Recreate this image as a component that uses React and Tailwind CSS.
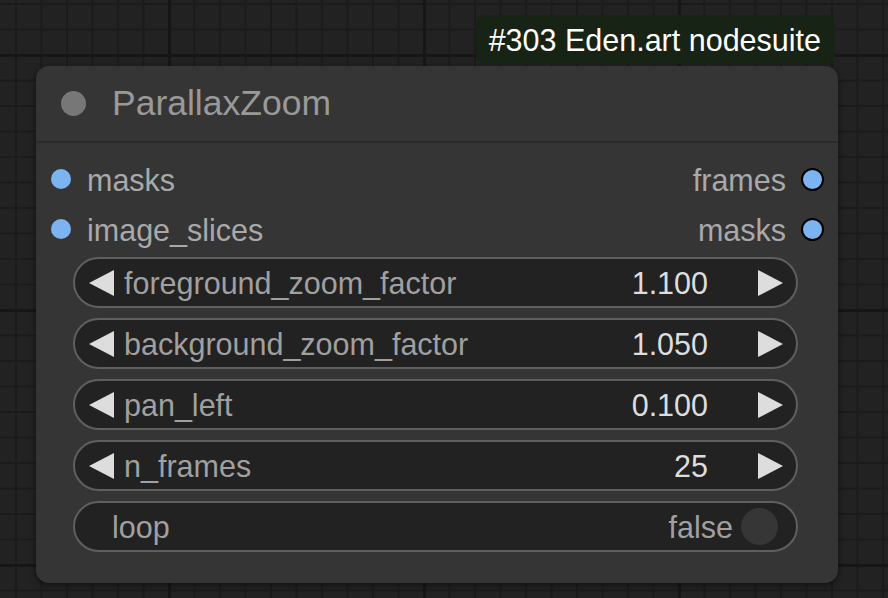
const Arrow = ({ dir }) => (
  <svg width="25" height="26" viewBox="0 0 25 26" className="shrink-0">
    {dir === "left" ? (
      <polygon points="25,0 25,26 0,13" fill="#dddddd" />
    ) : (
      <polygon points="0,0 0,26 25,13" fill="#dddddd" />
    )}
  </svg>
);

const NumberWidget = ({ label, value }) => (
  <div className="flex items-center h-[51px] rounded-full border-2 border-[#5f5f5f] bg-[#222222] pl-[14px] pr-[13px]">
    <Arrow dir="left" />
    <span className="ml-[10px] pt-[2px] text-[#a0a0a0]">{label}</span>
    <span className="ml-auto pt-[2px] text-[#dddddd]">{value}</span>
    <span className="ml-[50px] flex">
      <Arrow dir="right" />
    </span>
  </div>
);

const ToggleWidget = ({ label, value }) => (
  <div className="flex items-center h-[51px] rounded-full border-2 border-[#5f5f5f] bg-[#222222] pl-[37px] pr-[18px]">
    <span className="pt-[2px] text-[#a0a0a0]">{label}</span>
    <span className="ml-auto pt-[2px] text-[#a0a0a0]">{value}</span>
    <div className="ml-[8px] w-[37px] h-[37px] rounded-full bg-[#363636]" />
  </div>
);

const App = () => {
  const widgets = [
    { label: "foreground_zoom_factor", value: "1.100" },
    { label: "background_zoom_factor", value: "1.050" },
    { label: "pan_left", value: "0.100" },
    { label: "n_frames", value: "25" },
  ];

  return (
    <div className="w-[888px] h-[598px] overflow-hidden bg-[#222222] bg-[linear-gradient(to_right,#161616_3px,transparent_3px),linear-gradient(to_bottom,#161616_3px,transparent_3px),linear-gradient(to_right,#1b1b1b_2px,transparent_2px),linear-gradient(to_bottom,#1b1b1b_2px,transparent_2px)] bg-[size:255px_255px,255px_255px,25.5px_25.5px,25.5px_25.5px] bg-[position:168px_54px,168px_54px,15px_3px,15px_3px] font-['Liberation_Sans',Arial,sans-serif] text-[30.5px] leading-none pt-[15px]">
      <div className="flex justify-end pr-[53px]">
        <div className="h-[49px] pl-[13px] pr-[14px] pt-[2px] flex items-center rounded-[10px] bg-[#172315] text-white text-[30.5px]">
          #303 Eden.art nodesuite
        </div>
      </div>
      <div className="ml-[36px] mt-[2px] w-[802px] h-[517px] rounded-[13px] bg-[#353535] shadow-[0_2px_6px_rgba(0,0,0,0.5)]">
        <div className="h-[77px] flex items-center border-b-2 border-[#2c2c2c] pl-[25px]">
          <div className="w-[25px] h-[25px] rounded-full bg-[#777777]" />
          <span className="ml-[26px] text-[35.5px] text-[#999999]">ParallaxZoom</span>
        </div>
        <div className="pt-[11px]">
          <div className="flex items-center h-[50px] pl-[15px] pr-[14px]">
            <div className="w-[20px] h-[20px] rounded-full bg-[#7cb4f2]" />
            <span className="ml-[16px] pt-[2px] text-[#a9a9a9]">masks</span>
            <span className="ml-auto pt-[2px] text-[#a9a9a9]">frames</span>
            <div className="ml-[15px] w-[23px] h-[23px] rounded-full bg-[#7cb4f2] border-2 border-black" />
          </div>
          <div className="flex items-center h-[50px] pl-[15px] pr-[14px]">
            <div className="w-[20px] h-[20px] rounded-full bg-[#7cb4f2]" />
            <span className="ml-[16px] pt-[2px] text-[#a9a9a9]">image_slices</span>
            <span className="ml-auto pt-[2px] text-[#a9a9a9]">masks</span>
            <div className="ml-[15px] w-[23px] h-[23px] rounded-full bg-[#7cb4f2] border-2 border-black" />
          </div>
        </div>
        <div className="mt-[3px] ml-[37px] w-[725px] flex flex-col gap-[10px]">
          {widgets.map((w) => (
            <NumberWidget key={w.label} label={w.label} value={w.value} />
          ))}
          <ToggleWidget label="loop" value="false" />
        </div>
      </div>
    </div>
  );
};

export default App;
